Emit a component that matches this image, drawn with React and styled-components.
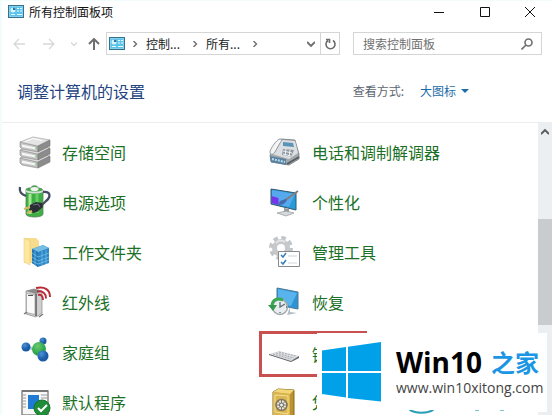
import { useState } from 'react';
import styled, { createGlobalStyle } from 'styled-components';

const GlobalStyle = createGlobalStyle`
  * {
    box-sizing: border-box;
  }
  body {
    margin: 0;
    background: #fff;
    font-family: "Noto Sans CJK SC", sans-serif;
    font-size: 12px;
    color: #1a1a1a;
  }
  button, input, select {
    font: inherit;
    color: inherit;
    border: 0;
    padding: 0;
    background: none;
  }
`;

const PanelIcon = () => (
  <svg width="16" height="13" viewBox="0 0 16 13" aria-hidden="true">
    <rect x="0.5" y="0.5" width="15" height="12" fill="#7fd3f0" stroke="#3a6f8c" />
    <rect x="2" y="2" width="12" height="9" fill="#5cc3ea" />
    <circle cx="5" cy="5" r="2.5" fill="#d9f3fb" />
    <path d="M5 5V2.5A2.5 2.5 0 0 1 7.500 5z" fill="#2474a8" />
    <path d="M9 3.500h2M12 3.500h2M9 6h2M12 6h2M3 9.500h4M9 9.500h5" stroke="#e9fbff" />
  </svg>
);

const StorageIcon = () => (
  <svg width="34" height="34" viewBox="0 0 34 34" aria-hidden="true">
    {[18, 10, 2].map((y) => (
      <g key={y} transform={`translate(0 ${y})`}>
        <path d="M2 5 20 9v6L4 12 2 10z" fill="#c4c4c4" stroke="#858585" strokeWidth=".6" />
        <path d="M2 5 15 0 32 3 20 9z" fill="#e4e4e4" stroke="#999" strokeWidth=".6" />
        <path d="M20 9 32 3v6l-12 6z" fill="#8c8c8c" stroke="#777" strokeWidth=".6" />
        <path d="M4 7.500 18 10.500v2L4 10z" fill="#f6f6f6" />
        <path d="M7 4.500 15 1.500l9 2" stroke="#fff" fill="none" />
        <path d="M18 9.500v3" stroke="#7fb87f" />
      </g>
    ))}
  </svg>
);

const PowerIcon = () => (
  <svg width="34" height="34" viewBox="0 0 34 34" aria-hidden="true">
    <path d="M8 5c0-2 3-2 5-2 0-3 7-3 7 0 3 0 5 1 5 3v23c0 4-17 4-17 0z" fill="#3fae45" stroke="#54805a" strokeWidth=".8" />
    <path d="M8 5c4 2 13 2 17 0v2c-4 2-13 2-17 0z" fill="#d4ddd6" />
    <path d="M12 9v20" stroke="#a4e993" strokeWidth="3" />
    <path d="M19 9v19" stroke="#66cf63" strokeWidth="3" />
    <ellipse cx="16.500" cy="4" rx="4" ry="2" fill="#f0f3ef" />
    <path d="M2 2c-1 5 1 7 6 9M25 7c8-1 8 5 3 9l-4 4" fill="none" stroke="#454b60" strokeWidth="2.300" />
    <path d="m12 20 6-3 6 1 1 4-6 5-4 1-4-3z" fill="#2b2e35" />
    <path d="m15 20 5-1 2 3" stroke="#6e7480" fill="none" />
    <path d="m12 22-6 2m8 2-5 2" stroke="#d6ba62" strokeWidth="2" />
  </svg>
);

const FolderIcon = () => (
  <svg width="34" height="34" viewBox="0 0 34 34" aria-hidden="true">
    <path d="M6 3h12l3 3v22H6z" fill="#f6dc8c" />
    <path d="m6 3 6 3v24l-6-3z" fill="#ffe7a0" stroke="#e6c66c" strokeWidth=".5" />
    <path d="m14 14 11-4 6 3v15l-11 4-6-4z" fill="#2f86c6" />
    <path d="m14 14 11-4 6 3-11 4z" fill="#75bde2" />
    <path d="m14 14 6 3v15l-6-4z" fill="#2677b3" />
    <path d="m14 18 6 4 11-4M14 22l6 4 11-4M14 26l6 3 11-4M24 16v15M28 15v14M17 16v14" stroke="#79c9ed" strokeWidth=".7" fill="none" />
  </svg>
);

const InfraredIcon = () => (
  <svg width="34" height="34" viewBox="0 0 34 34" aria-hidden="true">
    <path d="m8 6 8-2 8 2v22l-6 4-10-3z" fill="#cfcfcf" stroke="#888" strokeWidth=".7" />
    <path d="m8 6 8-2 8 2-6 3z" fill="#8a8a8a" />
    <path d="M18 9v22" stroke="#444" strokeWidth="1.300" />
    <path d="M8.500 8.500v19l8.500 2V10z" fill="#fafafa" stroke="#999" strokeWidth=".7" />
    <path d="M10 10.500h5" stroke="#555" />
    <path d="m6 29 3-2m12 5 4-3" stroke="#777" strokeWidth="1.500" />
    <path d="M20 10c3-1 5 1 5 5M19 6.500c6-1 9 2 9 7M18 3c9-2 14 2 14 9" fill="none" stroke="#b92c38" strokeWidth="2" />
  </svg>
);

const HomegroupIcon = () => (
  <svg width="34" height="34" viewBox="0 0 34 34" aria-hidden="true">
    <defs>
      <radialGradient id="blueBall" cx=".35" cy=".3">
        <stop offset="0" stopColor="#4c93d8" />
        <stop offset="1" stopColor="#1a5ba6" />
      </radialGradient>
      <radialGradient id="greenBall" cx=".4" cy=".3">
        <stop offset="0" stopColor="#6ccb74" />
        <stop offset="1" stopColor="#30a64c" />
      </radialGradient>
    </defs>
    <path d="m8 12 12 3 5-9M20 15l5 7" stroke="#a8d0dc" strokeWidth="3" fill="none" />
    <circle cx="8" cy="12" r="4.500" fill="url(#blueBall)" />
    <circle cx="25" cy="6" r="3.500" fill="url(#blueBall)" />
    <circle cx="21" cy="14" r="7" fill="url(#greenBall)" />
    <circle cx="25" cy="21" r="5.500" fill="url(#blueBall)" />
  </svg>
);

const DefaultsIcon = () => (
  <svg width="34" height="34" viewBox="0 0 34 34" aria-hidden="true">
    <path d="M4 6h26v24H4z" fill="#f7f7f7" stroke="#888" strokeWidth="1.500" />
    <path d="M4 6h26" stroke="#777" strokeWidth="2" />
    <path d="M10 10h11v14H10z" fill="#2079d2" />
    <path d="M5 10h3M5 13h3M5 16h3M5 19h3M5 22h3M23 10h6M23 13h6" stroke="#999" />
    <circle cx="24" cy="23" r="8" fill="#218d3b" stroke="#12752b" />
    <path d="m20 23 3 3 6-6" fill="none" stroke="#fff" strokeWidth="2" />
  </svg>
);

const PhoneIcon = () => (
  <svg width="34" height="34" viewBox="0 0 34 34" aria-hidden="true">
    <path d="m2 20 6-8 5-8 14 1 4 14v5l-10 6-18-3z" fill="#a3a8ac" stroke="#747b80" strokeWidth=".8" />
    <path d="m4 19 9-14 14 1 3 12-9 6z" fill="#dcdfe1" />
    <path d="m15 7 10 1 1 4-11-1z" fill="#5b93b8" />
    <path d="m15 14 11 1-3 7-9-2z" fill="#8d979e" />
    <path d="m15 16 9 2m-9 1 8 2M18 14l-1 7m5-6-1 7" stroke="#eef2f5" />
    <path d="M2 17c0-3 7-13 10-13 2 0 2 2 0 4L7 17c-2 3-5 3-5 0z" fill="#f3f5f5" stroke="#8f979d" />
    <path d="m2 21 16 3v6L3 27z" fill="#5a82a0" />
    <path d="m4 24 13 3" stroke="#b5d9ed" strokeDasharray="2 1" strokeWidth="2" />
    <path d="m19 29 12-7" stroke="#555d63" strokeWidth="2" />
  </svg>
);

const PersonalizeIcon = () => (
  <svg width="34" height="34" viewBox="0 0 34 34" aria-hidden="true">
    <path d="m3 4 25 4v17L3 19z" fill="#269bd9" stroke="#35546b" />
    <path d="m4 5 23 4-6 13L4 18z" fill="#55a9ec" />
    <path d="m3.500 11 7 2v7l-7-2z" fill="#7735e9" />
    <path d="m16 23 5 1v4h-5z" fill="#969da2" />
    <path d="m9 28 9-2 8 2-8 3z" fill="#d4d9dc" stroke="#888" strokeWidth=".6" />
    <path d="M30 6 16 16" stroke="#7c8083" strokeWidth="2" />
    <path d="m18 14-6 2-2 4c4 0 7-1 9-5z" fill="#4569ad" />
  </svg>
);

const ToolsIcon = () => (
  <svg width="34" height="34" viewBox="0 0 34 34" aria-hidden="true">
    <circle cx="13" cy="13" r="10" fill="none" stroke="#c3c6c8" strokeWidth="4" strokeDasharray="4.500 3.350" />
    <circle cx="13" cy="13" r="6.500" fill="none" stroke="#c5c9cb" strokeWidth="5" />
    <path d="M8 8c2-3 6-3 9-1" stroke="#e3e5e7" strokeWidth="2" fill="none" />
    <path d="M10.500 16.500h21v15h-21z" fill="#fff" stroke="#888" />
    <path d="m13 20 2 2 3-4m-5 9 2 2 3-4" stroke="#347ebd" strokeWidth="1.500" fill="none" />
    <path d="M20 21h9M20 28h9" stroke="#cfd5d9" />
  </svg>
);

const RecoveryIcon = () => (
  <svg width="34" height="34" viewBox="0 0 34 34" aria-hidden="true">
    <path d="m9 3 21 4v17L9 20z" fill="#2e94d4" stroke="#4a7a96" />
    <path d="m10 4 19 4-6 13-13-3z" fill="#59b3ed" />
    <path d="M22 22v5l7 1-10 2" fill="#b4bdc3" />
    <circle cx="12" cy="22" r="7.500" fill="#e8eef0" stroke="#a0a9a7" strokeWidth="1.500" />
    <path d="M12 17v5l5-3M12 27v1m-6-6H5m14 0h-1" fill="none" stroke="#5f6c72" strokeWidth="1.300" />
    <path d="M15 15C8 12 4 16 4 21" fill="none" stroke="#3ba752" strokeWidth="3" />
    <path d="M0 20h9l-4 6z" fill="#35984a" />
  </svg>
);

const KeyboardIcon = () => (
  <svg width="34" height="34" viewBox="0 0 34 34" aria-hidden="true">
    <path d="m1 17 10-3 20 5-8 5z" fill="#dcdee0" />
    <path d="m1 17 22 7 8-5v2l-8 4L1 18z" fill="#5b6067" />
    <path d="m5 17 18 5M8 16l18 5M11 15l17 4" stroke="#999fa6" strokeDasharray="2 1" strokeWidth=".8" />
  </svg>
);

const SafeIcon = () => (
  <svg width="34" height="34" viewBox="0 0 34 34" aria-hidden="true">
    <path d="m5 7 5-3 16 1v25l-5 4-16-3z" fill="#bd912e" stroke="#876822" />
    <path d="m5 7 5-3 16 1-4 4z" fill="#f2d779" />
    <path d="m5 7 17 2v24L5 30z" fill="#dab650" />
    <path d="m7 10 13 1v18L7 27z" fill="none" stroke="#f6df91" />
    <circle cx="13.500" cy="20" r="5.500" fill="#e9e5d4" stroke="#80745a" strokeWidth="1.500" />
    <path d="M13.500 14v12m-6-6h12m-10-4 8 8m0-8-8 8" stroke="#81796a" />
    <circle cx="13.500" cy="20" r="2" fill="#eee" stroke="#666" />
  </svg>
);

const Chevron = ({ direction = 'right', size = 6 }) => (
  <svg width={size} height={size} viewBox="0 0 8 8" fill="none" stroke="currentColor" strokeWidth="1.800" aria-hidden="true">
    {direction === 'right' && <path d="m2 0 4 4-4 4" />}
    {direction === 'down' && <path d="m0 2 4 4 4-4" />}
    {direction === 'up' && <path d="m0 6 4-4 4 4" />}
  </svg>
);

const Arrow = ({ turn = 0, weight = 1.3 }) => (
  <svg width="12" height="12" viewBox="0 0 12 12" fill="none" stroke="currentColor" strokeWidth={weight} aria-hidden="true">
    <path d="M12 6H1M6 1 1 6l5 5" transform={`rotate(${turn} 6 6)`} />
  </svg>
);

const Window = styled.div`
  position: relative;
  display: flex;
  flex-direction: column;
  height: 100vh;
  overflow: hidden;
  border-left: 2px solid #f0fdfc;
`;

const TitleBar = styled.header`
  display: flex;
  align-items: center;
  height: 22px;
  padding-left: 6px;
  border-top: 1px solid #f0fdfc;
`;

const Title = styled.h1`
  flex: 1;
  margin: 0 0 0 5px;
  font-size: 12px;
  font-weight: 400;
  color: #111;
`;

const WindowButton = styled.button`
  display: grid;
  place-items: center;
  width: 46px;
  height: 22px;

  &:last-child {
    width: 44px;
  }
`;

const Toolbar = styled.nav`
  display: flex;
  align-items: center;
  height: 23px;
  margin: 10px 10px 0 2px;
`;

const NavButton = styled.button`
  display: grid;
  place-items: center;
  width: ${({ $narrow }) => ($narrow ? '20px' : '30px')};
  height: 22px;
  color: ${({ $active }) => ($active ? '#707070' : '#d8d8d8')};
`;

const AddressBar = styled.div`
  display: flex;
  align-items: center;
  flex: 1;
  min-width: 0;
  height: 23px;
  margin-left: 2px;
  padding-left: 2px;
  border: 1px solid #d5d5d5;
  color: #6b6b6b;
`;

const Crumb = styled.button`
  width: 37px;
  margin: 0 8px 0 7px;
  color: #222;
  text-align: left;
  white-space: nowrap;
`;

const CrumbArrow = styled.span`
  display: grid;
  place-items: center;
  width: 8px;
  margin-left: ${({ $gap }) => $gap || 0}px;
`;

const BarButton = styled.button`
  display: grid;
  place-items: center;
  width: 19px;
  height: 21px;
  margin-left: ${({ $push }) => ($push ? 'auto' : 0)};
  border-left: ${({ $line }) => ($line ? '1px solid #d5d5d5' : '0')};
`;

const SearchBox = styled.form`
  display: flex;
  align-items: center;
  width: 189px;
  height: 23px;
  margin-left: 13px;
  padding: 0 8px 0 9px;
  border: 1px solid #d5d5d5;
  color: #707070;
`;

const SearchInput = styled.input`
  flex: 1;
  min-width: 0;
  outline: 0;

  &::placeholder {
    color: #707070;
    opacity: 1;
  }
`;

const Heading = styled.div`
  display: flex;
  align-items: center;
  height: 68px;
  padding: 4px 0 0 15px;
  border-bottom: 1px solid #ededed;

  h2 {
    flex: 1;
    margin: 0;
    font-size: 16px;
    font-weight: 400;
    color: #24447f;
  }
`;

const ViewMode = styled.div`
  display: flex;
  align-items: center;
  margin-right: 83px;
  color: #5c6670;

  select {
    width: 41px;
    margin-left: 16px;
    appearance: none;
    color: #1c6ca8;
  }

  svg {
    fill: #1c6ca8;
  }
`;

const Body = styled.main`
  display: flex;
  flex: 1;
  min-height: 0;
`;

const Items = styled.ul`
  display: grid;
  grid-template-columns: 1fr 1fr;
  grid-auto-rows: 50px;
  flex: 1;
  margin: 0;
  padding: 4px 29px 0 7px;
  list-style: none;
`;

const Item = styled.li`
  display: flex;
  align-items: center;
  padding-left: 9px;
`;

const ItemLink = styled.a`
  display: flex;
  align-items: center;
  gap: 10px;
  font-size: 16px;
  color: #1b7026;
  text-decoration: none;
`;

const MarkedItem = styled(Item)`
  width: 108px;
  height: 46px;
  margin-top: 4px;
  padding-left: 6px;
  border: 3px solid #c8504f;
  white-space: nowrap;
`;

const ScrollBar = styled.div`
  display: flex;
  flex-direction: column;
  width: 14px;
  background: #eceff1;
`;

const ScrollButton = styled.button`
  display: grid;
  place-items: center;
  height: 18px;
  color: #555;
`;

const ScrollThumb = styled.div`
  height: 106px;
  margin-top: 78px;
  background: #c9cbce;
`;

const Badge = styled.aside`
  position: absolute;
  right: 5px;
  bottom: 3px;
  display: flex;
  align-items: center;
  gap: 15px;
  width: 230px;
  height: 79px;
  padding: 0 0 1px 5px;
  background: #fff;
`;

const BadgeName = styled.div`
  display: flex;
  align-items: center;
  gap: 9px;
  font: 700 28px/32px "Open Sans", sans-serif;
  color: #000;

  span {
    font: 700 24px/32px "Noto Sans CJK SC", sans-serif;
    color: #1a96e4;
  }
`;

const BadgeSite = styled.div`
  font: 14px/20px "Open Sans", sans-serif;
  color: #444;
`;

const Stamp = styled.svg`
  position: absolute;
  right: 0;
  bottom: 0;
`;

const items = [
  { name: '存储空间', icon: StorageIcon },
  { name: '电话和调制解调器', icon: PhoneIcon },
  { name: '电源选项', icon: PowerIcon },
  { name: '个性化', icon: PersonalizeIcon },
  { name: '工作文件夹', icon: FolderIcon },
  { name: '管理工具', icon: ToolsIcon },
  { name: '红外线', icon: InfraredIcon },
  { name: '恢复', icon: RecoveryIcon },
  { name: '家庭组', icon: HomegroupIcon },
  { name: '键盘', icon: KeyboardIcon, marked: true },
  { name: '默认程序', icon: DefaultsIcon },
  { name: '凭据管理器', icon: SafeIcon },
];

const App = () => {
  const [query, setQuery] = useState('');

  return (
    <>
      <GlobalStyle />
      <Window>
        <TitleBar>
          <PanelIcon />
          <Title>所有控制面板项</Title>
          <WindowButton aria-label="最小化">
            <svg width="10" height="10" stroke="#111"><path d="M0 5.500h10" /></svg>
          </WindowButton>
          <WindowButton aria-label="最大化">
            <svg width="10" height="10" stroke="#111" fill="none"><path d="M.5.5h9v9h-9z" /></svg>
          </WindowButton>
          <WindowButton aria-label="关闭">
            <svg width="10" height="10" stroke="#111"><path d="m0 0 10 10M10 0 0 10" /></svg>
          </WindowButton>
        </TitleBar>

        <Toolbar>
          <NavButton aria-label="后退"><Arrow /></NavButton>
          <NavButton aria-label="前进"><Arrow turn={180} /></NavButton>
          <NavButton aria-label="最近" $narrow><Chevron direction="down" /></NavButton>
          <NavButton aria-label="向上" $narrow $active><Arrow turn={90} weight={2} /></NavButton>
          <AddressBar>
            <PanelIcon />
            <CrumbArrow $gap={6}><Chevron /></CrumbArrow>
            <Crumb>控制...</Crumb>
            <CrumbArrow><Chevron /></CrumbArrow>
            <Crumb>所有...</Crumb>
            <CrumbArrow><Chevron /></CrumbArrow>
            <BarButton aria-label="历史" $push><Chevron direction="down" size={8} /></BarButton>
            <BarButton aria-label="刷新" $line>
              <svg width="11" height="12" viewBox="0 0 11 12" fill="none" stroke="currentColor" strokeWidth="1.600">
                <path d="M3 2.500a4.500 4.500 0 1 0 5 0M1 1.500h3.500V5" />
              </svg>
            </BarButton>
          </AddressBar>
          <SearchBox onSubmit={(e) => e.preventDefault()}>
            <SearchInput
              aria-label="搜索控制面板"
              placeholder="搜索控制面板"
              value={query}
              onChange={(e) => setQuery(e.target.value)}
            />
            <svg width="12" height="12" viewBox="0 0 12 12" fill="none" stroke="currentColor" strokeWidth="1.600">
              <circle cx="7.500" cy="4.500" r="3.500" />
              <path d="M5 7 .5 11.500" />
            </svg>
          </SearchBox>
        </Toolbar>

        <Heading>
          <h2>调整计算机的设置</h2>
          <ViewMode>
            <label htmlFor="view">查看方式:</label>
            <select id="view" defaultValue="large">
              <option value="large">大图标</option>
              <option value="small">小图标</option>
            </select>
            <svg width="8" height="4" aria-hidden="true"><path d="M0 0h8L4 4z" /></svg>
          </ViewMode>
        </Heading>

        <Body>
          <Items>
            {items.map(({ name, icon: Icon, marked }) => {
              const Cell = marked ? MarkedItem : Item;
              return (
                <Cell key={name}>
                  <ItemLink href="#"><Icon />{name}</ItemLink>
                </Cell>
              );
            })}
          </Items>
          <ScrollBar>
            <ScrollButton aria-label="向上滚动"><Chevron direction="up" size={8} /></ScrollButton>
            <ScrollThumb />
          </ScrollBar>
        </Body>

        <Badge>
          <svg width="59" height="60" viewBox="0 0 59 60" fill="#00a1e9" aria-hidden="true">
            <path d="M0 8.500 24 5v24H0zM26 4.700 59 0v29H26zM0 31h24v24.500L0 52zM26 31h33v28.500L26 56z" />
          </svg>
          <div>
            <BadgeName>Win10<span>之家</span></BadgeName>
            <BadgeSite>www.win10xitong.com</BadgeSite>
          </div>
        </Badge>
        <Stamp width="150" height="5" viewBox="0 0 150 5" fill="none" aria-hidden="true">
          <path d="M7-1c5 5 20 5 25 0" stroke="#2c9fb8" strokeWidth="2" />
          <path d="M73 .5h4M98 .5h4" stroke="#7cc6d4" />
        </Stamp>
      </Window>
    </>
  );
};

export default App;
